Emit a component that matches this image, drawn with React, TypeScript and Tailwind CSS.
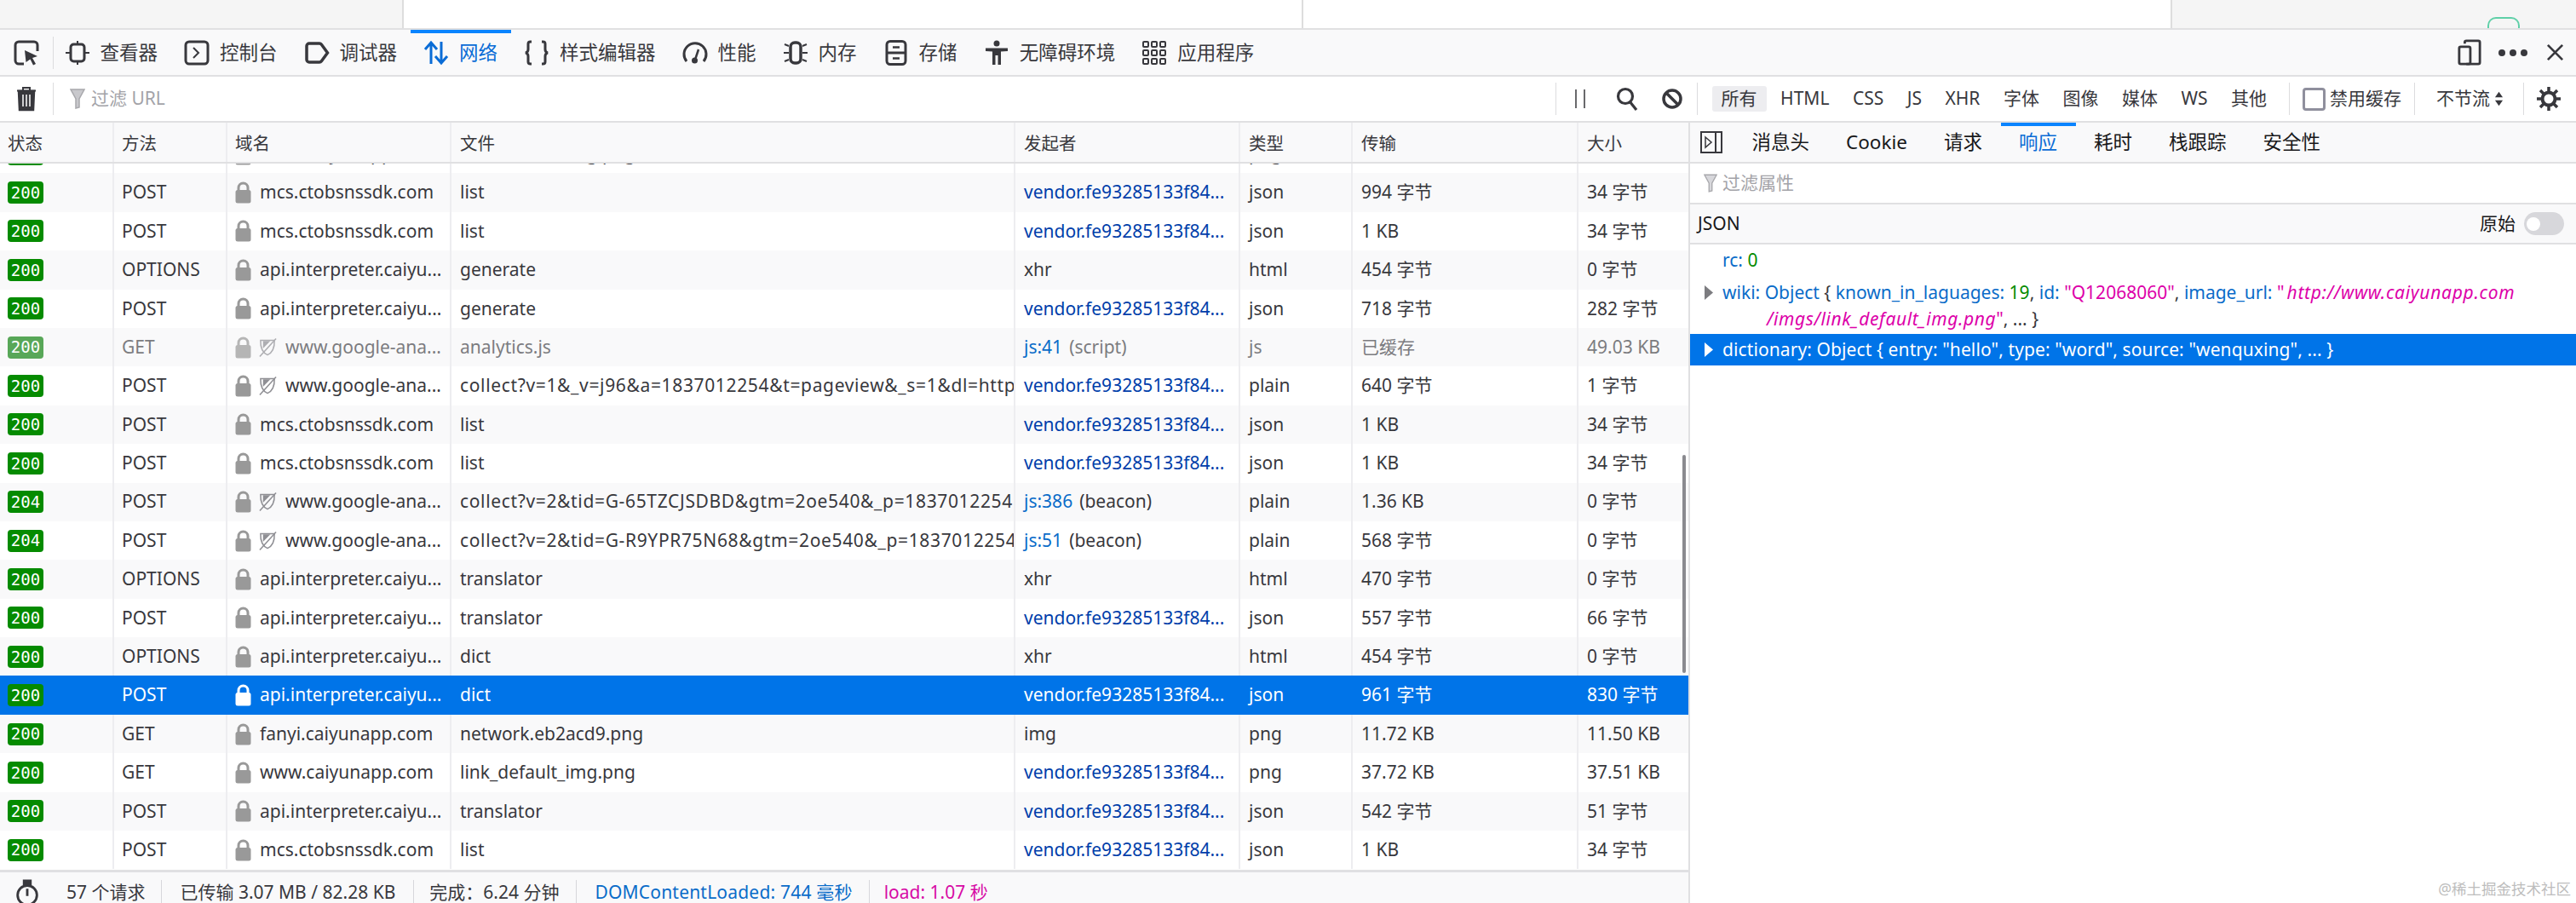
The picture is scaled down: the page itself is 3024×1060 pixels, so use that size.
import React from 'react';

const FONT = "font-['Noto_Sans','Noto_Sans_CJK_SC',sans-serif]";

type Row = {
  status?: string;
  method: string;
  domain: string;
  tracker?: boolean;
  file: string;
  init: string;
  initNote?: string;
  cause: string;
  transfer: string;
  size: string;
  cached?: boolean;
  selected?: boolean;
};

const VENDOR = 'vendor.fe93285133f84...';
const API = 'api.interpreter.caiyu...';
const MCS = 'mcs.ctobsnssdk.com';
const GA = 'www.google-ana...';

const rows: Row[] = [
  { method: 'GET', domain: 'www.caiyunapp.com', file: 'link_default_img.png', init: VENDOR, cause: 'png', transfer: '37.72 KB', size: '37.51 KB' },
  { method: 'POST', domain: MCS, file: 'list', init: VENDOR, cause: 'json', transfer: '994 字节', size: '34 字节' },
  { method: 'POST', domain: MCS, file: 'list', init: VENDOR, cause: 'json', transfer: '1 KB', size: '34 字节' },
  { method: 'OPTIONS', domain: API, file: 'generate', init: 'xhr', cause: 'html', transfer: '454 字节', size: '0 字节' },
  { method: 'POST', domain: API, file: 'generate', init: VENDOR, cause: 'json', transfer: '718 字节', size: '282 字节' },
  { method: 'GET', domain: GA, tracker: true, file: 'analytics.js', init: 'js:41', initNote: '(script)', cause: 'js', transfer: '已缓存', size: '49.03 KB', cached: true },
  { method: 'POST', domain: GA, tracker: true, file: 'collect?v=1&_v=j96&a=1837012254&t=pageview&_s=1&dl=https%3A%2F%2Ffanyi', init: VENDOR, cause: 'plain', transfer: '640 字节', size: '1 字节' },
  { method: 'POST', domain: MCS, file: 'list', init: VENDOR, cause: 'json', transfer: '1 KB', size: '34 字节' },
  { method: 'POST', domain: MCS, file: 'list', init: VENDOR, cause: 'json', transfer: '1 KB', size: '34 字节' },
  { status: '204', method: 'POST', domain: GA, tracker: true, file: 'collect?v=2&tid=G-65TZCJSDBD&gtm=2oe540&_p=1837012254', init: 'js:386', initNote: '(beacon)', cause: 'plain', transfer: '1.36 KB', size: '0 字节' },
  { status: '204', method: 'POST', domain: GA, tracker: true, file: 'collect?v=2&tid=G-R9YPR75N68&gtm=2oe540&_p=1837012254', init: 'js:51', initNote: '(beacon)', cause: 'plain', transfer: '568 字节', size: '0 字节' },
  { method: 'OPTIONS', domain: API, file: 'translator', init: 'xhr', cause: 'html', transfer: '470 字节', size: '0 字节' },
  { method: 'POST', domain: API, file: 'translator', init: VENDOR, cause: 'json', transfer: '557 字节', size: '66 字节' },
  { method: 'OPTIONS', domain: API, file: 'dict', init: 'xhr', cause: 'html', transfer: '454 字节', size: '0 字节' },
  { method: 'POST', domain: API, file: 'dict', init: VENDOR, cause: 'json', transfer: '961 字节', size: '830 字节', selected: true },
  { method: 'GET', domain: 'fanyi.caiyunapp.com', file: 'network.eb2acd9.png', init: 'img', cause: 'png', transfer: '11.72 KB', size: '11.50 KB' },
  { method: 'GET', domain: 'www.caiyunapp.com', file: 'link_default_img.png', init: VENDOR, cause: 'png', transfer: '37.72 KB', size: '37.51 KB' },
  { method: 'POST', domain: API, file: 'translator', init: VENDOR, cause: 'json', transfer: '542 字节', size: '51 字节' },
  { method: 'POST', domain: MCS, file: 'list', init: VENDOR, cause: 'json', transfer: '1 KB', size: '34 字节' },
];

function Lock({ white }: { white?: boolean }) {
  return (
    <svg viewBox="0 0 19 26" className="w-[19px] h-[26px] shrink-0">
      <path d="M4 11V7.5a5.5 5.5 0 0 1 11 0V11" fill="none" stroke={white ? '#fff' : '#999'} strokeWidth="3" />
      <rect x="0.5" y="10" width="18" height="15.5" rx="2.5" fill={white ? '#fff' : '#999'} />
    </svg>
  );
}

function Shield() {
  return (
    <svg viewBox="0 0 22 24" className="w-[21px] h-[24px] shrink-0" fill="none" stroke="#8f8f94" strokeWidth="1.6">
      <path d="M2 3h17c.3 8-2 15-8.5 18C4 18 1.7 11 2 3z" />
      <path d="M5 4v9l9-9z" fill="#8f8f94" stroke="none" />
      <path d="M1 23 21 1" />
    </svg>
  );
}

function StatusBadge({ code, faded }: { code: string; faded?: boolean }) {
  return (
    <span className={`w-[42px] h-[26px] rounded-[4px] flex items-center justify-center text-white text-[19px] font-['DejaVu_Sans_Mono',monospace] ${faded ? 'bg-[#58a758]' : 'bg-[#058b00]'}`}>
      {code}
    </span>
  );
}

function initColor(row: Row) {
  if (row.selected) return 'text-white';
  if (row.initNote) return 'text-[#0a6cc9]';
  return row.init === VENDOR ? 'text-[#003eaa]' : '';
}

function NetRow({ row, index }: { row: Row; index: number }) {
  const sel = !!row.selected;
  const bg = sel ? 'bg-[#0074e8] text-white' : index % 2 === 1 ? 'bg-[#f9f9fa]' : 'bg-white';
  const txt = sel ? 'text-white' : row.cached ? 'text-[#7c7c80]' : 'text-[#38383d]';
  const line = sel ? 'border-[#0074e8]' : 'border-[#ededf0]';
  const wide = row.file.startsWith('collect') ? 'tracking-[0.65px]' : '';
  return (
    <div className={`flex h-[45.4px] text-[21px] shrink-0 ${bg} ${txt}`}>
      <div className={`w-[134px] pl-[9px] flex items-center border-r-2 ${line}`}>
        <StatusBadge code={row.status ?? '200'} faded={row.cached} />
      </div>
      <div className={`w-[133px] pl-[9px] flex items-center border-r-2 ${line}`}>{row.method}</div>
      <div className={`w-[263px] pl-[9px] flex items-center gap-[10px] border-r-2 whitespace-nowrap ${line}`}>
        <span className={row.cached ? 'opacity-70' : ''}><Lock white={sel} /></span>
        {row.tracker && <span className={`-ml-[1px] ${row.cached ? 'opacity-70' : ''}`}><Shield /></span>}
        <span>{row.domain}</span>
      </div>
      <div className={`w-[662px] pl-[10px] flex items-center overflow-hidden whitespace-nowrap border-r-2 ${line} ${wide}`}>{row.file}</div>
      <div className={`w-[264px] pl-[10px] flex items-center gap-[8px] whitespace-nowrap border-r-2 ${line}`}>
        <span className={initColor(row)}>{row.init}</span>
        {row.initNote && <span>{row.initNote}</span>}
      </div>
      <div className={`w-[132px] pl-[10px] flex items-center border-r-2 ${line}`}>{row.cause}</div>
      <div className={`w-[265px] pl-[10px] flex items-center border-r-2 ${line}`}>{row.transfer}</div>
      <div className="flex-1 pl-[10px] flex items-center">{row.size}</div>
    </div>
  );
}

function ToolTab({ icon, label, active }: { icon: React.ReactNode; label: string; active?: boolean }) {
  return (
    <div className={`relative h-full flex items-center gap-[12px] px-[15.5px] shrink-0 ${active ? 'text-[#0a6cd6]' : 'text-[#38383d]'}`}>
      {active && <div className="absolute left-0 right-0 top-0 h-[4px] bg-[#0a84ff]" />}
      {icon}
      <span>{label}</span>
    </div>
  );
}

const ic = 'w-[30px] h-[30px] shrink-0';

function Sep() {
  return <div className="w-[1px] h-[38px] bg-[#dcdcde] shrink-0" />;
}

function HeadCell({ label, className }: { label: string; className: string }) {
  return <div className={`h-full flex items-center pt-[3px] border-r-2 border-[#ededf0] ${className}`}>{label}</div>;
}

function SideTab({ label, active }: { label: string; active?: boolean }) {
  return (
    <div className={`relative h-full flex items-center px-[21.5px] ${active ? 'text-[#0a6cd6]' : 'text-[#18181a]'}`}>
      {active && <div className="absolute left-0 right-0 top-0 h-[4px] bg-[#0a84ff]" />}
      {label}
    </div>
  );
}

export default function App() {
  return (
    <div className={`w-[3024px] h-[1060px] overflow-hidden flex flex-col bg-white text-[#38383d] ${FONT}`}>
      {/* browser page peeking above devtools */}
      <div className="h-[33px] flex shrink-0">
        <div className="w-[474px] bg-[#f5f5f5] border-r-2 border-[#dddddd]" />
        <div className="w-[1056px] border-r-2 border-[#dddddd]" />
        <div className="w-[1020px] border-r-2 border-[#dddddd]" />
        <div className="flex-1 bg-[#f5f5f5] flex items-end pl-[370px]">
          <div className="w-[38px] h-[13px] rounded-t-[10px] border-2 border-b-0 border-[#5fd0a8]" />
        </div>
      </div>

      {/* tool tabs */}
      <div className="h-[55px] shrink-0 flex items-center bg-[#f9f9fa] border-t-2 border-[#e0e0e2] text-[22.5px]">
        <div className="w-[62px] flex justify-center shrink-0">
          <svg viewBox="0 0 30 30" className={ic} fill="none" stroke="#38383d" strokeWidth="3">
            <path d="M12 28H6a4 4 0 0 1-4-4V6a4 4 0 0 1 4-4h18a4 4 0 0 1 4 4v7" />
            <path d="M13 12l15 7-6 2 4 7-3 1.5-3.5-7-5 3.5z" fill="#38383d" stroke="none" />
          </svg>
        </div>
        <div className="w-[1px] h-[38px] bg-[#dcdcde]" />
        <div className="flex items-center h-full -ml-[3px]">
          <ToolTab label="查看器" icon={
            <svg viewBox="0 0 30 30" className={ic} fill="none" stroke="#38383d" strokeWidth="3">
              <rect x="7" y="5" width="16" height="20" rx="3.5" />
              <path d="M15 1v4M15 25v4M1 15h6M23 15h6" strokeWidth="2" />
            </svg>
          } />
          <ToolTab label="控制台" icon={
            <svg viewBox="0 0 30 30" className={ic} fill="none" stroke="#38383d" strokeWidth="3">
              <rect x="2" y="2" width="26" height="26" rx="4" />
              <path d="M11 9l6 6-6 6" strokeWidth="2" />
            </svg>
          } />
          <ToolTab label="调试器" icon={
            <svg viewBox="0 0 30 30" className={ic} fill="none" stroke="#38383d" strokeWidth="3.5">
              <path d="M6 4h12a3 3 0 0 1 2.4 1.2L27.5 15l-7.1 9.8A3 3 0 0 1 18 26H6a3 3 0 0 1-3-3V7a3 3 0 0 1 3-3z" />
            </svg>
          } />
          <ToolTab active label="网络" icon={
            <svg viewBox="0 0 30 30" className={ic} fill="none" stroke="#0a6cd6" strokeWidth="3">
              <path d="M9 28V4M2 11l7-8 7 8" />
              <path d="M21 2v24M14 19l7 8 7-8" />
            </svg>
          } />
          <ToolTab label="样式编辑器" icon={
            <svg viewBox="0 0 30 30" className={ic} fill="none" stroke="#38383d" strokeWidth="3">
              <path d="M9 2H7.5C6 2 5 3 5 4.5V11c0 2-1 3.5-3 4 2 .5 3 2 3 4v6.5C5 27 6 28 7.5 28H9" />
              <path d="M21 2h1.5C24 2 25 3 25 4.5V11c0 2 1 3.5 3 4-2 .5-3 2-3 4v6.5c0 1.5-1 2.5-2.5 2.5H21" />
            </svg>
          } />
          <ToolTab label="性能" icon={
            <svg viewBox="0 0 30 30" className={ic} fill="none" stroke="#38383d" strokeWidth="3">
              <path d="M5 25A13 13 0 1 1 25 25" />
              <path d="M15 23l4-12" strokeWidth="2.5" />
              <circle cx="14.5" cy="24" r="3.5" fill="#38383d" stroke="none" />
            </svg>
          } />
          <ToolTab label="内存" icon={
            <svg viewBox="0 0 30 30" className={ic} fill="none" stroke="#38383d" strokeWidth="3.5">
              <rect x="9" y="3" width="12" height="24" rx="5" />
              <path d="M7 7L2 5M7 15H1M7 23l-5 2M23 7l5-2M23 15h6M23 23l5 2" strokeWidth="2" />
            </svg>
          } />
          <ToolTab label="存储" icon={
            <svg viewBox="0 0 26 30" className={ic} fill="none" stroke="#38383d" strokeWidth="3">
              <rect x="2" y="1.5" width="22" height="27" rx="4" />
              <path d="M2 15h22" />
              <path d="M9 8.5h8M9 21.5h8" strokeWidth="2.5" />
            </svg>
          } />
          <ToolTab label="无障碍环境" icon={
            <svg viewBox="0 0 30 30" className={ic} fill="#38383d">
              <circle cx="15" cy="4" r="3.5" />
              <path d="M2 9.5h26V13l-8 .5V29h-3.5V18h-3v11H10V13.5L2 13z" />
            </svg>
          } />
          <ToolTab label="应用程序" icon={
            <svg viewBox="0 0 30 30" className={ic} fill="none" stroke="#38383d" strokeWidth="2">
              <rect x="2" y="2" width="6" height="6" rx="1" /><rect x="12" y="2" width="6" height="6" rx="1" /><rect x="22" y="2" width="6" height="6" rx="1" />
              <rect x="2" y="12" width="6" height="6" rx="1" /><rect x="12" y="12" width="6" height="6" rx="1" /><rect x="22" y="12" width="6" height="6" rx="1" />
              <rect x="2" y="22" width="6" height="6" rx="1" /><rect x="12" y="22" width="6" height="6" rx="1" /><rect x="22" y="22" width="6" height="6" rx="1" />
            </svg>
          } />
        </div>
        <div className="flex-1" />
        <svg viewBox="0 0 30 32" className="w-[28px] h-[31px] shrink-0" fill="none" stroke="#38383d" strokeWidth="3">
          <path d="M9 5V3.5C9 2.5 10 1.5 11 1.5h15c1 0 2 1 2 2v25c0 1-1 2-2 2H11" />
          <rect x="2" y="9" width="14" height="21.5" rx="2" />
        </svg>
        <div className="ml-[20px] flex gap-[5px] shrink-0">
          <div className="w-[8px] h-[8px] rounded-full bg-[#38383d]" />
          <div className="w-[8px] h-[8px] rounded-full bg-[#38383d]" />
          <div className="w-[8px] h-[8px] rounded-full bg-[#38383d]" />
        </div>
        <svg viewBox="0 0 22 22" className="ml-[22px] mr-[14px] w-[21px] h-[21px] shrink-0" stroke="#38383d" strokeWidth="2.8">
          <path d="M2 2l18 18M20 2L2 20" />
        </svg>
      </div>

      {/* filter bar */}
      <div className="h-[56px] shrink-0 flex items-center border-y-2 border-[#e0e0e2] text-[21px] bg-white pr-[17px]">
        <div className="w-[62px] flex justify-center shrink-0">
          <svg viewBox="0 0 24 30" className="w-[24px] h-[30px]" fill="none" stroke="#38383d" strokeWidth="2.5">
            <path d="M3 6h18l-1 22H4z" fill="#38383d" />
            <path d="M8 10v14M12 10v14M16 10v14" stroke="#fff" strokeWidth="1.5" />
            <path d="M1 5.5h22M8 5V2h8v3" strokeWidth="2" />
          </svg>
        </div>
        <div className="w-[1px] h-[38px] bg-[#dcdcde] shrink-0" />
        <svg viewBox="0 0 18 26" className="ml-[19px] w-[18px] h-[26px] shrink-0" fill="#c8c8cc" stroke="#a8a8ac" strokeWidth="1.5">
          <path d="M1 2h16L11 13v10l-4 1V13z" />
        </svg>
        <span className="ml-[7px] text-[#a3a3a8]">过滤 URL</span>
        <div className="flex-1" />
        <Sep />
        <svg viewBox="0 0 14 24" className="ml-[21px] w-[14px] h-[24px] shrink-0" stroke="#38383d" strokeWidth="1.5">
          <path d="M2 1v22M12 1v22" />
        </svg>
        <svg viewBox="0 0 26 28" className="ml-[35px] w-[26px] h-[28px] shrink-0" fill="none" stroke="#38383d" strokeWidth="3.2">
          <circle cx="11" cy="11" r="8.5" />
          <path d="M16 17l8 10" />
        </svg>
        <svg viewBox="0 0 24 24" className="ml-[28px] w-[24px] h-[24px] shrink-0" fill="none" stroke="#38383d" strokeWidth="3.5">
          <circle cx="12" cy="12" r="10" />
          <path d="M5 5l14 14" />
        </svg>
        <div className="ml-[17px]"><Sep /></div>
        <div className="ml-[17px] flex items-center gap-[5.5px] text-[#38383d] whitespace-nowrap">
          <span className="h-[30px] px-[11px] flex items-center rounded-[3px] bg-[#ededf0]">所有</span>
          <span className="px-[11px]">HTML</span>
          <span className="px-[11px]">CSS</span>
          <span className="px-[11px]">JS</span>
          <span className="px-[11px]">XHR</span>
          <span className="px-[11px]">字体</span>
          <span className="px-[11px]">图像</span>
          <span className="px-[11px]">媒体</span>
          <span className="px-[11px]">WS</span>
          <span className="px-[11px]">其他</span>
        </div>
        <div className="ml-[15px]"><Sep /></div>
        <div className="ml-[15px] w-[27px] h-[27px] rounded-[4px] border-[3px] border-[#8f8f9d] shrink-0" />
        <span className="ml-[5px] whitespace-nowrap">禁用缓存</span>
        <div className="ml-[15px]"><Sep /></div>
        <span className="ml-[25px] whitespace-nowrap">不节流</span>
        <svg viewBox="0 0 12 22" className="ml-[5px] w-[11px] h-[20px] shrink-0" fill="#38383d">
          <path d="M6 2l5 7H1zM6 20l-5-7h10z" />
        </svg>
        <div className="ml-[23px]"><Sep /></div>
        <svg viewBox="0 0 30 30" className="ml-[14px] w-[30px] h-[30px] shrink-0" fill="none" stroke="#38383d">
          <circle cx="15" cy="15" r="7.5" strokeWidth="4" />
          <path d="M15 1v6M15 23v6M1 15h6M23 15h6M5 5l4.5 4.5M20.5 20.5L25 25M25 5l-4.5 4.5M9.5 20.5L5 25" strokeWidth="3.5" />
        </svg>
      </div>

      {/* table + sidebar */}
      <div className="flex flex-1 min-h-0">
        <div className="w-[1984px] shrink-0 flex flex-col border-r-2 border-[#e0e0e2]">
          <div className="h-[48px] shrink-0 flex border-b-2 border-[#e0e0e2] bg-[#f9f9fa] text-[20.5px] text-[#38383d]">
            <HeadCell label="状态" className="w-[134px] pl-[9px]" />
            <HeadCell label="方法" className="w-[133px] pl-[9px]" />
            <HeadCell label="域名" className="w-[263px] pl-[9px]" />
            <HeadCell label="文件" className="w-[662px] pl-[10px]" />
            <HeadCell label="发起者" className="w-[264px] pl-[10px]" />
            <HeadCell label="类型" className="w-[132px] pl-[10px]" />
            <HeadCell label="传输" className="w-[265px] pl-[10px]" />
            <div className="flex-1 pl-[10px] pt-[3px] flex items-center">大小</div>
          </div>
          <div className="relative h-[829px] overflow-hidden shrink-0">
            <div className="-mt-[34px] flex flex-col">
              {rows.map((r, i) => (
                <NetRow key={i} row={r} index={i} />
              ))}
            </div>
            {/* scrollbar thumb */}
            <div className="absolute left-[1975px] top-[342px] w-[4px] h-[256px] rounded-full bg-[#8a8a8f]" />
          </div>
          <div className="h-[50px] shrink-0 flex items-center border-t-[3px] border-[#e0e0e2] bg-[#f9f9fa] text-[21px] whitespace-nowrap">
            <svg viewBox="0 0 28 36" className="ml-[18px] w-[28px] h-[34px] shrink-0" fill="none" stroke="#38383d" strokeWidth="3">
              <circle cx="14" cy="21" r="12" />
              <path d="M14 13v9" />
              <path d="M10 3h8v4h-8z" fill="#38383d" />
            </svg>
            <span className="ml-[32px]">57 个请求</span>
            <div className="ml-[19px] w-[1px] h-[30px] bg-[#d7d7db]" />
            <span className="ml-[21px]">已传输 3.07 MB / 82.28 KB</span>
            <div className="ml-[21px] w-[1px] h-[30px] bg-[#d7d7db]" />
            <span className="ml-[18px]">完成：6.24 分钟</span>
            <div className="ml-[20px] w-[1px] h-[30px] bg-[#d7d7db]" />
            <span className="ml-[21px] tracking-[0.2px] text-[#0a6cc9]">DOMContentLoaded: 744 毫秒</span>
            <div className="ml-[19px] w-[1px] h-[30px] bg-[#d7d7db]" />
            <span className="ml-[17px] text-[#d70ba5]">load: 1.07 秒</span>
          </div>
        </div>

        {/* sidebar */}
        <div className="flex-1 min-w-0 flex flex-col relative">
          <div className="h-[48px] shrink-0 flex items-center border-b-2 border-[#e0e0e2] bg-[#f9f9fa] text-[22.5px]">
            <svg viewBox="0 0 26 26" className="ml-[12px] w-[26px] h-[26px] shrink-0" fill="none" stroke="#38383d" strokeWidth="2">
              <rect x="1" y="1" width="24" height="24" />
              <path d="M18 1v24" />
              <path d="M6 7l7 6-7 6z" strokeWidth="1.5" />
            </svg>
            <div className="ml-[13px] h-full flex">
              <SideTab label="消息头" />
              <SideTab label="Cookie" />
              <SideTab label="请求" />
              <SideTab active label="响应" />
              <SideTab label="耗时" />
              <SideTab label="栈跟踪" />
              <SideTab label="安全性" />
            </div>
          </div>
          <div className="h-[48px] shrink-0 flex items-center border-b-2 border-[#e0e0e2] text-[21px] text-[#a3a3a8]">
            <svg viewBox="0 0 18 26" className="ml-[16px] w-[16px] h-[24px] shrink-0" fill="#d7d7db" stroke="#a8a8ac" strokeWidth="1.5">
              <path d="M1 2h16L11 13v10l-4 1V13z" />
            </svg>
            <span className="ml-[6px]">过滤属性</span>
          </div>
          <div className="h-[47px] shrink-0 flex items-center border-b-2 border-[#e0e0e2] bg-[#f9f9fa] text-[21px] text-[#18181a]">
            <span className="ml-[9px]">JSON</span>
            <div className="flex-1" />
            <span>原始</span>
            <div className="ml-[10px] mr-[14px] w-[47px] h-[27px] rounded-full bg-[#d7d7db] flex items-center pl-[3px]">
              <div className="w-[16px] h-[16px] rounded-full bg-white" />
            </div>
          </div>
          <div className="flex flex-col text-[21px] text-[#0a6cc9]">
            <div className="h-[38px] pl-[38px] flex items-center">
              <span>rc:&nbsp;</span><span className="text-[#058b00]">0</span>
            </div>
            <div className="h-[67px] flex items-start">
              <svg viewBox="0 0 10 17" className="ml-[17px] mt-[10px] w-[10px] h-[17px] shrink-0" fill="#7c7c80">
                <path d="M0 0l10 8.5L0 17z" />
              </svg>
              <div className="ml-[11px] leading-[31px] pt-[3px]">
                <span>wiki: Object </span>
                <span className="text-[#38383d]">{'{ '}</span>
                <span>known_in_laguages: </span>
                <span className="text-[#058b00]">19</span>
                <span className="text-[#38383d]">, </span>
                <span>id: </span>
                <span className="text-[#dd00a9]">"Q12068060"</span>
                <span className="text-[#38383d]">, </span>
                <span>image_url: </span>
                <span className="text-[#dd00a9]">"<i className="ml-[3px] tracking-[0.7px]">http://www.caiyunapp.com</i></span>
                <div className="pl-[52px]">
                  <span className="text-[#dd00a9]"><i className="tracking-[0.6px]">/imgs/link_default_img.png</i>"</span>
                  <span className="text-[#38383d]">, ... {'}'}</span>
                </div>
              </div>
            </div>
            <div className="h-[37px] bg-[#0074e8] text-white flex items-center">
              <svg viewBox="0 0 10 17" className="ml-[17px] w-[10px] h-[17px] shrink-0" fill="#fff">
                <path d="M0 0l10 8.5L0 17z" />
              </svg>
              <span className="ml-[11px] whitespace-nowrap tracking-[0.1px]">dictionary: Object {'{'} entry: "hello", type: "word", source: "wenquxing", ... {'}'}</span>
            </div>
          </div>
          <div className="absolute right-[6px] bottom-[4px] text-[17.5px] text-[#bdbdbd]">@稀土掘金技术社区</div>
        </div>
      </div>
    </div>
  );
}
